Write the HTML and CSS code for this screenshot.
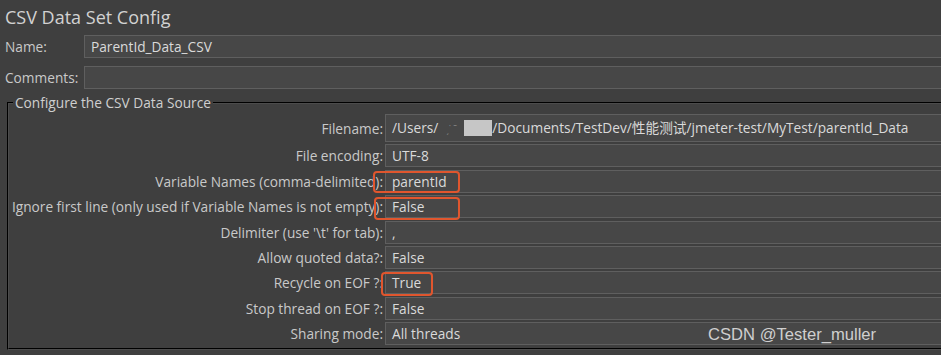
FILE: index.html
```html
<!DOCTYPE html>
<html lang="en">
<head>
    <meta charset="UTF-8">
    <meta name="viewport" content="width=device-width, initial-scale=1.0">
    <title>CSV Data Set Config</title>
    <link rel="stylesheet" href="styles.css">
</head>
<body>
    <div class="panel">
        <h1 class="title">CSV Data Set Config</h1>
        <div class="meta-row">
            <span class="meta-label">Name:</span>
            <div class="field">ParentId_Data_CSV</div>
        </div>
        <div class="meta-row">
            <span class="meta-label">Comments:</span>
            <div class="field"></div>
        </div>

        <fieldset class="source">
            <legend>Configure the CSV Data Source</legend>
            <div class="grid">
                <span class="label">Filename:</span>
                <div class="field tall">/Users/<span class="specks">ˏ˙ ˉ</span><span class="blot"></span>/Documents/TestDev/性能测试/jmeter-test/MyTest/parentId_Data</div>

                <span class="label">File encoding:</span>
                <div class="field">UTF-8</div>

                <span class="label">Variable Names (comma-delimited):</span>
                <div class="field">parentId</div>

                <span class="label">Ignore first line (only used if Variable Names is not empty):</span>
                <div class="field">False</div>

                <span class="label">Delimiter (use '\t' for tab):</span>
                <div class="field">,</div>

                <span class="label">Allow quoted data?:</span>
                <div class="field">False</div>

                <span class="label">Recycle on EOF ?:</span>
                <div class="field">True</div>

                <span class="label">Stop thread on EOF ?:</span>
                <div class="field">False</div>

                <span class="label">Sharing mode:</span>
                <div class="field">All threads</div>
            </div>
        </fieldset>

        <!-- highlight marks drawn over the form -->
        <div class="mark mark-names"></div>
        <div class="mark mark-ignore"></div>
        <div class="mark mark-recycle"></div>

        <div class="watermark">CSDN @Tester_muller</div>
    </div>
</body>
</html>
```

FILE: styles.css
```css
body {
    margin: 0;
    background-color: #3f3f3f;
    overflow: hidden;
    font-family: "Open Sans", "Noto Sans CJK SC", sans-serif;
    font-size: 13.7px;
    color: #c9c9c9;
}
.panel {
    position: relative;
    height: 355px;
    overflow: hidden;
}
.title {
    margin: 0;
    padding: 5px 0 0 5px;
    height: 30px;
    box-sizing: border-box;
    font-size: 18px;
    font-weight: normal;
    line-height: 24px;
    color: #d2d2d2;
}
.meta-row {
    display: flex;
    align-items: center;
    height: 23px;
    margin-top: 5px;
}
.meta-row + .meta-row {
    margin-top: 8px;
}
.meta-label {
    width: 79px;
    padding-left: 5px;
}
.field {
    flex: 1;
    min-width: 0;
    height: 23px;
    box-sizing: border-box;
    background-color: #474747;
    border: 1px solid #5f5f5f;
    border-right: none;
    padding: 0 6px;
    line-height: 21px;
    color: #dadada;
    white-space: nowrap;
    overflow: hidden;
}
.source {
    margin: 6px 0 0 7px;
    padding: 0 0 3px 0;
    border: 2px groove #4c4c4c;
    border-right: none;
    min-width: 0;
}
.source legend {
    margin-left: 4px;
    padding: 0 2px;
    line-height: 15px;
    color: #cfcfcf;
}
.grid {
    display: grid;
    grid-template-columns: 374px minmax(0, 1fr);
    column-gap: 2px;
    row-gap: 2.4px;
    padding-top: 4px;
    align-items: center;
}
.label {
    text-align: right;
    white-space: nowrap;
}
.field.tall {
    height: 28px;
    line-height: 26px;
}
.specks {
    display: inline-block;
    width: 26px;
    color: #8a8a8a;
    font-size: 10px;
    text-align: center;
}
.blot {
    display: inline-block;
    width: 28px;
    height: 16px;
    vertical-align: -3px;
    background-color: #c6c6c6;
    filter: blur(0.6px);
}
.mark {
    position: absolute;
    border: 2px solid #e0562e;
    border-radius: 4px;
    box-sizing: border-box;
}
.mark-names {
    left: 373px;
    top: 171px;
    width: 87px;
    height: 22px;
}
.mark-ignore {
    left: 374px;
    top: 197px;
    width: 86px;
    height: 23px;
}
.mark-recycle {
    left: 381px;
    top: 272px;
    width: 52px;
    height: 24px;
}
.watermark {
    position: absolute;
    left: 708px;
    top: 325px;
    font-family: "Liberation Sans", sans-serif;
    font-size: 16.6px;
    line-height: 20px;
    color: #cfcfcf;
}
```
